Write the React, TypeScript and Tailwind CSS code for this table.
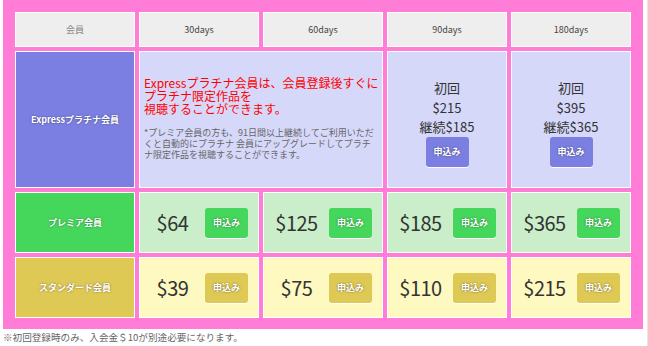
import React from 'react'

const jp = "font-['Noto_Sans_CJK_JP','Noto_Sans',sans-serif]"

const plans = [
  { prices: ['$64', '$125', '$185', '$365'], cell: 'bg-[#c9eec9]', btn: 'bg-[#45d75c]' },
  { prices: ['$39', '$75', '$110', '$215'], cell: 'bg-[#fef8c1]', btn: 'bg-[#dfc955]' },
]

function ApplyButton({ color }: { color: string }) {
  return (
    <button
      className={`${color} w-[43px] h-[30px] rounded-[3px] text-white text-[9px] font-bold leading-none [text-shadow:0_0_2px_rgba(0,0,0,0.55)] shadow-[0_1px_0_rgba(255,255,255,0.9)]`}
    >
      申込み
    </button>
  )
}

function Label({ text, color }: { text: string; color: string }) {
  return (
    <div
      className={`${color} border border-white flex items-center justify-center text-white text-[9px] font-bold [text-shadow:0_0_2px_rgba(0,0,0,0.5)]`}
    >
      {text}
    </div>
  )
}

export default function App() {
  return (
    <div className={`w-[648px] h-[346px] bg-white border-r border-[#e6e6e6] ${jp}`}>
      <div className="ml-[3px] w-[640px] bg-[#ff7dd6] pt-[12px] pl-[12px] pb-[11px]">
        <div className="grid grid-cols-[repeat(5,120px)] grid-rows-[35px_137px_61px_61px] gap-[4px]">
          {/* header */}
          <div className="bg-[#eeeeee] border border-white flex items-center justify-center text-[9px] text-[#888]">
            会員
          </div>
          {['30days', '60days', '90days', '180days'].map((d) => (
            <div
              key={d}
              className="bg-[#eeeeee] border border-white flex items-center justify-center text-[9px] text-[#444]"
            >
              {d}
            </div>
          ))}

          {/* express */}
          <Label text="Expressプラチナ会員" color="bg-[#7b7fe1]" />
          <div className="col-span-2 bg-[#d6d8fa] border border-white flex flex-col justify-center pl-[4px] pb-[4px]">
            <p className="text-[12px] leading-[13px] text-[#ff0000] whitespace-nowrap">
              Expressプラチナ会員は、会員登録後すぐに
              <br />
              プラチナ限定作品を
              <br />
              視聴することができます。
            </p>
            <p className="mt-[12px] text-[9px] leading-[11px] text-[#666] whitespace-nowrap">
              *プレミア会員の方も、91日間以上継続してご利用いただ
              <br />
              くと自動的にプラチナ 会員にアップグレードしてプラチ
              <br />
              ナ限定作品を視聴することができます。
            </p>
          </div>
          {[
            ['$215', '$185'],
            ['$395', '$365'],
          ].map(([first, cont]) => (
            <div
              key={first}
              className="bg-[#d6d8fa] border border-white flex flex-col items-center justify-center pt-[6px] text-[13px] leading-[19.5px] text-[#333]"
            >
              <span>初回</span>
              <span>{first}</span>
              <span>継続{cont}</span>
              <ApplyButton color="bg-[#7b7fe1]" />
            </div>
          ))}

          {/* premium / standard */}
          {plans.map((plan, i) => (
            <React.Fragment key={i}>
              <Label
                text={i === 0 ? 'プレミア会員' : 'スタンダード会員'}
                color={i === 0 ? 'bg-[#45d75c]' : 'bg-[#dfc955]'}
              />
              {plan.prices.map((p) => (
                <div
                  key={p}
                  className={`${plan.cell} border border-white flex items-center justify-center gap-[10px]`}
                >
                  <span className="w-[45px] text-center text-[20px] text-[#333] tracking-[-0.5px]">{p}</span>
                  <ApplyButton color={plan.btn} />
                </div>
              ))}
            </React.Fragment>
          ))}
        </div>
      </div>
      <p className="ml-[3px] text-[9.6px] leading-[16px] text-[#666]">
        ※初回登録時のみ、入会金＄10が別途必要になります。
      </p>
    </div>
  )
}
